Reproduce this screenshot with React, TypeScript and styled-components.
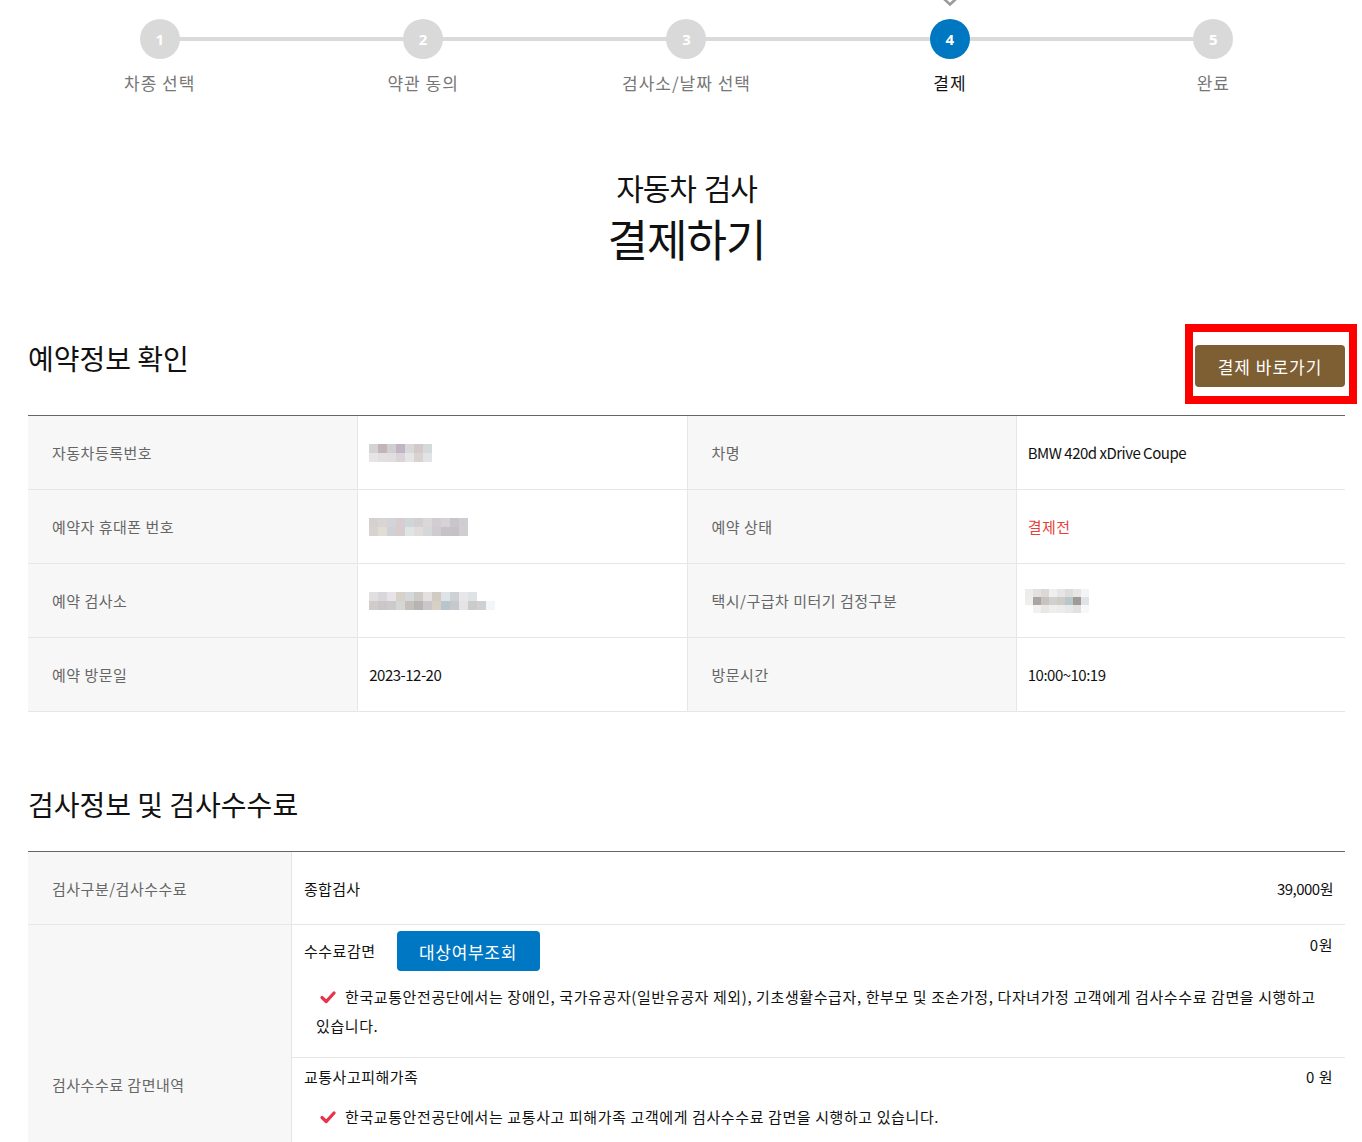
import React from "react";
import styled, { createGlobalStyle } from "styled-components";

const GlobalStyle = createGlobalStyle`
  * { box-sizing: border-box; }
  body {
    margin: 0;
    background: #fff;
    color: #111;
    font-family: "Noto Sans CJK KR", "Noto Sans", sans-serif;
  }
`;

const Page = styled.div`
  padding: 0 17px 60px 28px;
`;

/* ---------- stepper ---------- */
const Stepper = styled.ol`
  list-style: none;
  margin: 0;
  padding: 0;
  display: grid;
  grid-template-columns: repeat(5, 1fr);
`;

const Step = styled.li`
  position: relative;
  display: flex;
  flex-direction: column;
  align-items: center;
  padding-top: 19px;
  &:not(:first-child)::before {
    content: "";
    position: absolute;
    top: 37px;
    left: -50%;
    right: 50%;
    height: 4px;
    background: #dadada;
    z-index: 0;
  }
`;

const Circle = styled.span<{ $active?: boolean }>`
  position: relative;
  z-index: 1;
  width: 40px;
  height: 40px;
  border-radius: 50%;
  background: ${(p) => (p.$active ? "#0077c1" : "#d9d9d9")};
  color: #fff;
  font: 700 15px "Open Sans", "Noto Sans", sans-serif;
  display: flex;
  align-items: center;
  justify-content: center;
`;

const StepLabel = styled.span<{ $active?: boolean }>`
  margin-top: 12px;
  font-size: 17px;
  line-height: 24px;
  letter-spacing: 1px;
  color: ${(p) => (p.$active ? "#111" : "#777")};
`;

const Marker = styled.svg`
  position: absolute;
  top: -2px;
  left: 50%;
  transform: translateX(-50%);
`;

/* ---------- heading ---------- */
const Heading = styled.header`
  margin-top: 76px;
  text-align: center;
`;

const SubTitle = styled.p`
  margin: 0;
  font-size: 30px;
  line-height: 32px;
  letter-spacing: -1px;
  word-spacing: 2px;
  color: #111;
`;

const MainTitle = styled.h1`
  margin: 10px 0 0 0;
  font-size: 44px;
  line-height: 50px;
  font-weight: 400;
  letter-spacing: -1px;
  color: #111;
`;

/* ---------- sections ---------- */
const SectionHeader = styled.div<{ $top: number; $bottom: number }>`
  display: flex;
  justify-content: space-between;
  align-items: flex-end;
  margin-top: ${(p) => p.$top}px;
  padding-bottom: ${(p) => p.$bottom}px;
`;

const SectionTitle = styled.h2<{ $mb?: number }>`
  margin: 0 0 ${(p) => p.$mb ?? 0}px 0;
  font-size: 28px;
  line-height: 36px;
  font-weight: 400;
  letter-spacing: 0;
  color: #111;
`;

const PayWrap = styled.div`
  position: relative;
  display: flex;
`;

const PayButton = styled.button`
  width: 150px;
  height: 42px;
  border: 0;
  border-radius: 4px;
  background: #7e5e33;
  color: #fff;
  font-family: inherit;
  font-size: 17px;
  letter-spacing: 1px;
  cursor: pointer;
`;

const Highlight = styled.span`
  position: absolute;
  top: -21px;
  left: -10px;
  right: -12px;
  bottom: -17px;
  border: 8px solid #ff0000;
  pointer-events: none;
`;

/* ---------- info table ---------- */
const InfoGrid = styled.div`
  display: grid;
  grid-template-columns: repeat(4, 1fr);
  border-top: 1px solid #666;
`;

const Cell = styled.div<{ $head?: boolean; $first?: boolean }>`
  height: 74px;
  display: flex;
  align-items: center;
  border-bottom: 1px solid #e6e6e6;
  border-left: ${(p) => (p.$first ? "0" : "1px solid #e6e6e6")};
  background: ${(p) => (p.$head ? "#f7f7f7" : "#fff")};
  padding-left: ${(p) => (p.$head ? "24px" : "11px")};
  font-size: 15px;
  letter-spacing: ${(p) => (p.$head ? "0.5px" : "-0.5px")};
  color: ${(p) => (p.$head ? "#666" : "#111")};
`;

const Red = styled.span`
  color: #e8403a;
  letter-spacing: 0.5px;
`;

const Mosaic = styled.div<{ $cols: number; $size: number; $shift?: number }>`
  display: grid;
  grid-template-columns: repeat(${(p) => p.$cols}, ${(p) => p.$size}px);
  grid-auto-rows: ${(p) => p.$size}px;
  margin-left: ${(p) => p.$shift ?? 0}px;
`;

const Px = styled.span.attrs<{ $c: string }>((p) => ({
  style: { background: p.$c },
}))<{ $c: string }>`
  display: block;
`;

/* ---------- fee table ---------- */
const FeeGrid = styled.div`
  display: grid;
  grid-template-columns: 263px 1fr;
  border-top: 1px solid #666;
`;

const FeeHead = styled.div<{ $h?: number }>`
  display: flex;
  align-items: center;
  min-height: ${(p) => p.$h ?? 73}px;
  padding-left: 24px;
  background: #f7f7f7;
  border-bottom: 1px solid #e6e6e6;
  font-size: 15px;
  letter-spacing: 0.5px;
  color: #666;
`;

const FeeBody = styled.div`
  border-left: 1px solid #e6e6e6;
  border-bottom: 1px solid #e6e6e6;
  display: flex;
  flex-direction: column;
`;

const FeeLine = styled.div`
  display: flex;
  justify-content: space-between;
  align-items: center;
  height: 72px;
  padding: 0 12px;
  font-size: 15px;
  letter-spacing: 0.3px;
  color: #111;
`;

const Num = styled.span`
  letter-spacing: -0.5px;
`;

const SubBlock = styled.div<{ $pt: number; $minH?: number; $divider?: boolean }>`
  padding: ${(p) => p.$pt}px 12px 17px 12px;
  min-height: ${(p) => (p.$minH ? `${p.$minH}px` : "auto")};
  border-top: ${(p) => (p.$divider ? "1px solid #e6e6e6" : "0")};
`;

const SubHead = styled.div`
  display: flex;
  justify-content: space-between;
  align-items: flex-start;
  font-size: 15px;
  letter-spacing: 0.5px;
  color: #111;
`;

const SubLabelGroup = styled.div`
  display: flex;
  align-items: center;
  gap: 21px;
  line-height: 20px;
`;

const Price = styled.span<{ $mt?: number }>`
  line-height: 20px;
  margin-top: ${(p) => p.$mt ?? 0}px;
`;

const CheckButton = styled.button`
  height: 40px;
  width: 143px;
  border: 0;
  border-radius: 4px;
  background: #0077c2;
  color: #fff;
  font-family: inherit;
  font-size: 17px;
  letter-spacing: 0.7px;
  cursor: pointer;
`;

const Notice = styled.p<{ $mt: number }>`
  margin: ${(p) => p.$mt}px 0 0 0;
  padding-left: 12px;
  font-size: 15px;
  line-height: 29px;
  letter-spacing: 0.6px;
  color: #111;
`;

const CheckIcon = styled.svg`
  display: inline-block;
  vertical-align: -1px;
  margin: 0 9px 0 4px;
`;

const Check = () => (
  <CheckIcon width="16" height="13" viewBox="0 0 16 13">
    <path
      d="M2 6.5 L6.2 10.6 L14 2"
      fill="none"
      stroke="#e8334a"
      strokeWidth="3.2"
      strokeLinecap="round"
      strokeLinejoin="round"
    />
  </CheckIcon>
);

const Blur = ({
  rows,
  size = 9,
  shift,
}: {
  rows: string[][];
  size?: number;
  shift?: number;
}) => (
  <Mosaic $cols={rows[0].length} $size={size} $shift={shift}>
    {rows.flatMap((r, i) => r.map((c, j) => <Px key={`${i}-${j}`} $c={c} />))}
  </Mosaic>
);

const steps = ["차종 선택", "약관 동의", "검사소/날짜 선택", "결제", "완료"];

const plate = [
  ["#d5d2d3", "#c3b4b6", "#cfced3", "#c1b5c5", "#d8d7da", "#d2c9c9", "#d6d9da", "#ffffff"],
  ["#e6e5e6", "#e2dfe1", "#e3dde0", "#dbd3da", "#e7e4e6", "#d9d2d1", "#e1e3e4", "#ffffff"],
];
const phone = [
  ["#d6d0d0", "#d9d5d3", "#d3d4d8", "#d7ccd0", "#cfd6d8", "#d3cfd3", "#dcd8da", "#d1cdd2", "#d6d2d6", "#c8c6cb", "#d0cdd2"],
  ["#d8d3d2", "#e0ddd4", "#d0d0d6", "#d7cdcf", "#dfe4e6", "#e0dcdb", "#d5d8d9", "#cecccf", "#c5c2c8", "#c4c2c7", "#d0cdd3"],
];
const center = [
  ["#e2dfe0", "#d9d6dc", "#e6e4e8", "#d7d1c9", "#d4d8da", "#cdcbc8", "#e4e0df", "#d2cbc4", "#dde3e6", "#ccd1d5", "#e8e6e8", "#dfe3e5", "#ffffff", "#ffffff"],
  ["#cfccc9", "#cbc7c9", "#cccbc9", "#d5d6d6", "#c5c1ba", "#b7b5b4", "#c9c7ca", "#d7d0c5", "#b8c6cc", "#c5c9cb", "#e4e4e6", "#cbcbcb", "#cfd0cf", "#f2f6f8"],
];
const meter = [
  ["#ececec", "#e4e0e0", "#dcd8d6", "#f0eff0", "#e6e4e4", "#dcdcda", "#e7e5e5", "#f4f4f7", "#ffffff"],
  ["#eeeeee", "#a8a6a5", "#c9c3c0", "#d2d0cf", "#cfcbc6", "#b8c8c8", "#9e9a98", "#dfe2e6", "#ffffff"],
  ["#ffffff", "#f1f1f1", "#e9e6e3", "#eeeeee", "#ececea", "#e5e9ea", "#e3e1e0", "#f8f8fa", "#ffffff"],
];

export default function App() {
  return (
    <>
      <GlobalStyle />
      <Page>
        <Stepper>
          {steps.map((s, i) => {
            const active = i === 3;
            return (
              <Step key={s}>
                {active && (
                  <Marker width="18" height="9" viewBox="0 0 18 9">
                    <polyline
                      points="2,0 9,6.5 16,0"
                      fill="none"
                      stroke="#9a9a9a"
                      strokeWidth="2.6"
                    />
                  </Marker>
                )}
                <Circle $active={active}>{i + 1}</Circle>
                <StepLabel $active={active}>{s}</StepLabel>
              </Step>
            );
          })}
        </Stepper>

        <Heading>
          <SubTitle>자동차 검사</SubTitle>
          <MainTitle>결제하기</MainTitle>
        </Heading>

        <SectionHeader $top={77} $bottom={28}>
          <SectionTitle $mb={11}>예약정보 확인</SectionTitle>
          <PayWrap>
            <PayButton type="button">결제 바로가기</PayButton>
            <Highlight />
          </PayWrap>
        </SectionHeader>

        <InfoGrid>
          <Cell $head $first>자동차등록번호</Cell>
          <Cell>
            <Blur rows={plate} />
          </Cell>
          <Cell $head>차명</Cell>
          <Cell>BMW 420d xDrive Coupe</Cell>

          <Cell $head $first>예약자 휴대폰 번호</Cell>
          <Cell>
            <Blur rows={phone} />
          </Cell>
          <Cell $head>예약 상태</Cell>
          <Cell>
            <Red>결제전</Red>
          </Cell>

          <Cell $head $first>예약 검사소</Cell>
          <Cell>
            <Blur rows={center} />
          </Cell>
          <Cell $head>택시/구급차 미터기 검정구분</Cell>
          <Cell>
            <Blur rows={meter} size={8} shift={-3} />
          </Cell>

          <Cell $head $first>예약 방문일</Cell>
          <Cell>2023-12-20</Cell>
          <Cell $head>방문시간</Cell>
          <Cell>10:00~10:19</Cell>
        </InfoGrid>

        <SectionHeader $top={74} $bottom={29}>
          <SectionTitle>검사정보 및 검사수수료</SectionTitle>
        </SectionHeader>

        <FeeGrid>
          <FeeHead>검사구분/검사수수료</FeeHead>
          <FeeBody>
            <FeeLine>
              <span>종합검사</span>
              <Num>39,000원</Num>
            </FeeLine>
          </FeeBody>

          <FeeHead $h={320}>검사수수료 감면내역</FeeHead>
          <FeeBody>
            <SubBlock $pt={6}>
              <SubHead>
                <SubLabelGroup>
                  <span>수수료감면</span>
                  <CheckButton type="button">대상여부조회</CheckButton>
                </SubLabelGroup>
                <Price $mt={4}>0원</Price>
              </SubHead>
              <Notice $mt={11}>
                <Check />
                한국교통안전공단에서는 장애인, 국가유공자(일반유공자 제외), 기초생활수급자, 한부모 및
                조손가정, 다자녀가정 고객에게 검사수수료 감면을 시행하고 있습니다.
              </Notice>
            </SubBlock>
            <SubBlock $pt={9} $minH={186} $divider>
              <SubHead>
                <Price>교통사고피해가족</Price>
                <Price>0 원</Price>
              </SubHead>
              <Notice $mt={15}>
                <Check />
                한국교통안전공단에서는 교통사고 피해가족 고객에게 검사수수료 감면을 시행하고 있습니다.
              </Notice>
            </SubBlock>
          </FeeBody>
        </FeeGrid>
      </Page>
    </>
  );
}
